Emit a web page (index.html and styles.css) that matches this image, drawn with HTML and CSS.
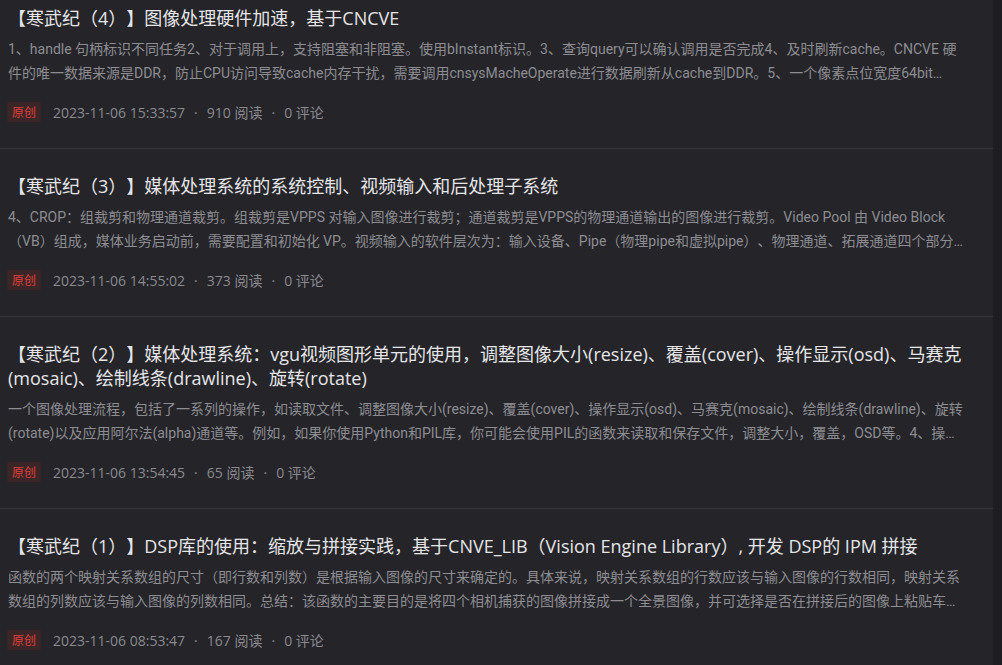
FILE: index.html
```html
<!DOCTYPE html>
<html lang="zh-CN">
<head>
<meta charset="utf-8">
<title>文章列表</title>
<link rel="stylesheet" href="styles.css">
</head>
<body>
<div class="page">
  <main class="list">
    <article class="item">
      <h3 class="title">【寒武纪（4）】图像处理硬件加速，基于CNCVE</h3>
      <div class="desc">
        <span class="line">1、handle 句柄标识不同任务2、对于调用上，支持阻塞和非阻塞。使用bInstant标识。3、查询query可以确认调用是否完成4、及时刷新cache。CNCVE 硬</span>
        <span class="line">件的唯一数据来源是DDR，防止CPU访问导致cache内存干扰，需要调用cnsysMacheOperate进行数据刷新从cache到DDR。5、一个像素点位宽度64bit…</span>
      </div>
      <div class="meta">
        <span class="badge">原创</span>
        <span>2023-11-06 15:33:57</span>
        <span class="dot">·</span>
        <span>910 阅读</span>
        <span class="dot">·</span>
        <span>0 评论</span>
      </div>
    </article>
    <article class="item">
      <h3 class="title">【寒武纪（3）】媒体处理系统的系统控制、视频输入和后处理子系统</h3>
      <div class="desc">
        <span class="line">4、CROP：组裁剪和物理通道裁剪。组裁剪是VPPS 对输入图像进行裁剪；通道裁剪是VPPS的物理通道输出的图像进行裁剪。Video Pool 由 Video Block</span>
        <span class="line">（VB）组成，媒体业务启动前，需要配置和初始化 VP。视频输入的软件层次为：输入设备、Pipe（物理pipe和虚拟pipe）、物理通道、拓展通道四个部分…</span>
      </div>
      <div class="meta">
        <span class="badge">原创</span>
        <span>2023-11-06 14:55:02</span>
        <span class="dot">·</span>
        <span>373 阅读</span>
        <span class="dot">·</span>
        <span>0 评论</span>
      </div>
    </article>
    <article class="item">
      <h3 class="title">【寒武纪（2）】媒体处理系统：vgu视频图形单元的使用，调整图像大小(resize)、覆盖(cover)、操作显示(osd)、马赛克(mosaic)、绘制线条(drawline)、旋转(rotate)</h3>
      <div class="desc">
        <span class="line">一个图像处理流程，包括了一系列的操作，如读取文件、调整图像大小(resize)、覆盖(cover)、操作显示(osd)、马赛克(mosaic)、绘制线条(drawline)、旋转</span>
        <span class="line">(rotate)以及应用阿尔法(alpha)通道等。例如，如果你使用Python和PIL库，你可能会使用PIL的函数来读取和保存文件，调整大小，覆盖，OSD等。4、操…</span>
      </div>
      <div class="meta">
        <span class="badge">原创</span>
        <span>2023-11-06 13:54:45</span>
        <span class="dot">·</span>
        <span>65 阅读</span>
        <span class="dot">·</span>
        <span>0 评论</span>
      </div>
    </article>
    <article class="item">
      <h3 class="title">【寒武纪（1）】DSP库的使用：缩放与拼接实践，基于CNVE_LIB（Vision Engine Library）, 开发 DSP的 IPM 拼接</h3>
      <div class="desc">
        <span class="line">函数的两个映射关系数组的尺寸（即行数和列数）是根据输入图像的尺寸来确定的。具体来说，映射关系数组的行数应该与输入图像的行数相同，映射关系</span>
        <span class="line">数组的列数应该与输入图像的列数相同。总结：该函数的主要目的是将四个相机捕获的图像拼接成一个全景图像，并可选择是否在拼接后的图像上粘贴车…</span>
      </div>
      <div class="meta">
        <span class="badge">原创</span>
        <span>2023-11-06 08:53:47</span>
        <span class="dot">·</span>
        <span>167 阅读</span>
        <span class="dot">·</span>
        <span>0 评论</span>
      </div>
    </article>
  </main>
  <aside class="rail"></aside>
</div>
</body>
</html>
```
FILE: styles.css
```css
html, body {
  margin: 0;
  padding: 0;
  height: 100%;
  overflow: hidden;
  background: #242429;
}

body {
  font-family: Roboto, "Noto Sans CJK SC", sans-serif;
  text-spacing-trim: space-all;
}

.page {
  display: flex;
  height: 100%;
}

.list {
  flex: 1;
  min-width: 0;
  margin-top: -19px;
}

.rail {
  width: 9px;
  flex: none;
  background: #1e1e21;
}

.item {
  padding: 25px 12px 26px 8px;
  border-bottom: 1px solid #37373c;
}

.title {
  margin: 0;
  font-family: "Open Sans", "Noto Sans CJK SC", sans-serif;
  font-size: 18px;
  line-height: 24px;
  font-weight: normal;
  color: #e6e6e8;
}

.desc {
  margin-top: 7px;
  font-size: 14px;
  line-height: 24px;
  color: #8d8d92;
}

.line {
  display: block;
  white-space: nowrap;
  overflow: hidden;
  text-overflow: ellipsis;
}

.meta {
  margin-top: 17px;
  height: 20px;
  display: flex;
  align-items: center;
  font-family: "Open Sans", "Noto Sans CJK SC", sans-serif;
  font-size: 14px;
  color: #8a8a8f;
}

.badge {
  height: 20px;
  line-height: 20px;
  padding: 0 5px;
  margin-left: -1px;
  margin-right: 12px;
  font-family: "Noto Sans CJK SC", sans-serif;
  font-size: 12px;
  color: #e0403c;
  background: #3a2527;
  border-radius: 2px;
}

.dot {
  padding: 0 9px;
}
```
